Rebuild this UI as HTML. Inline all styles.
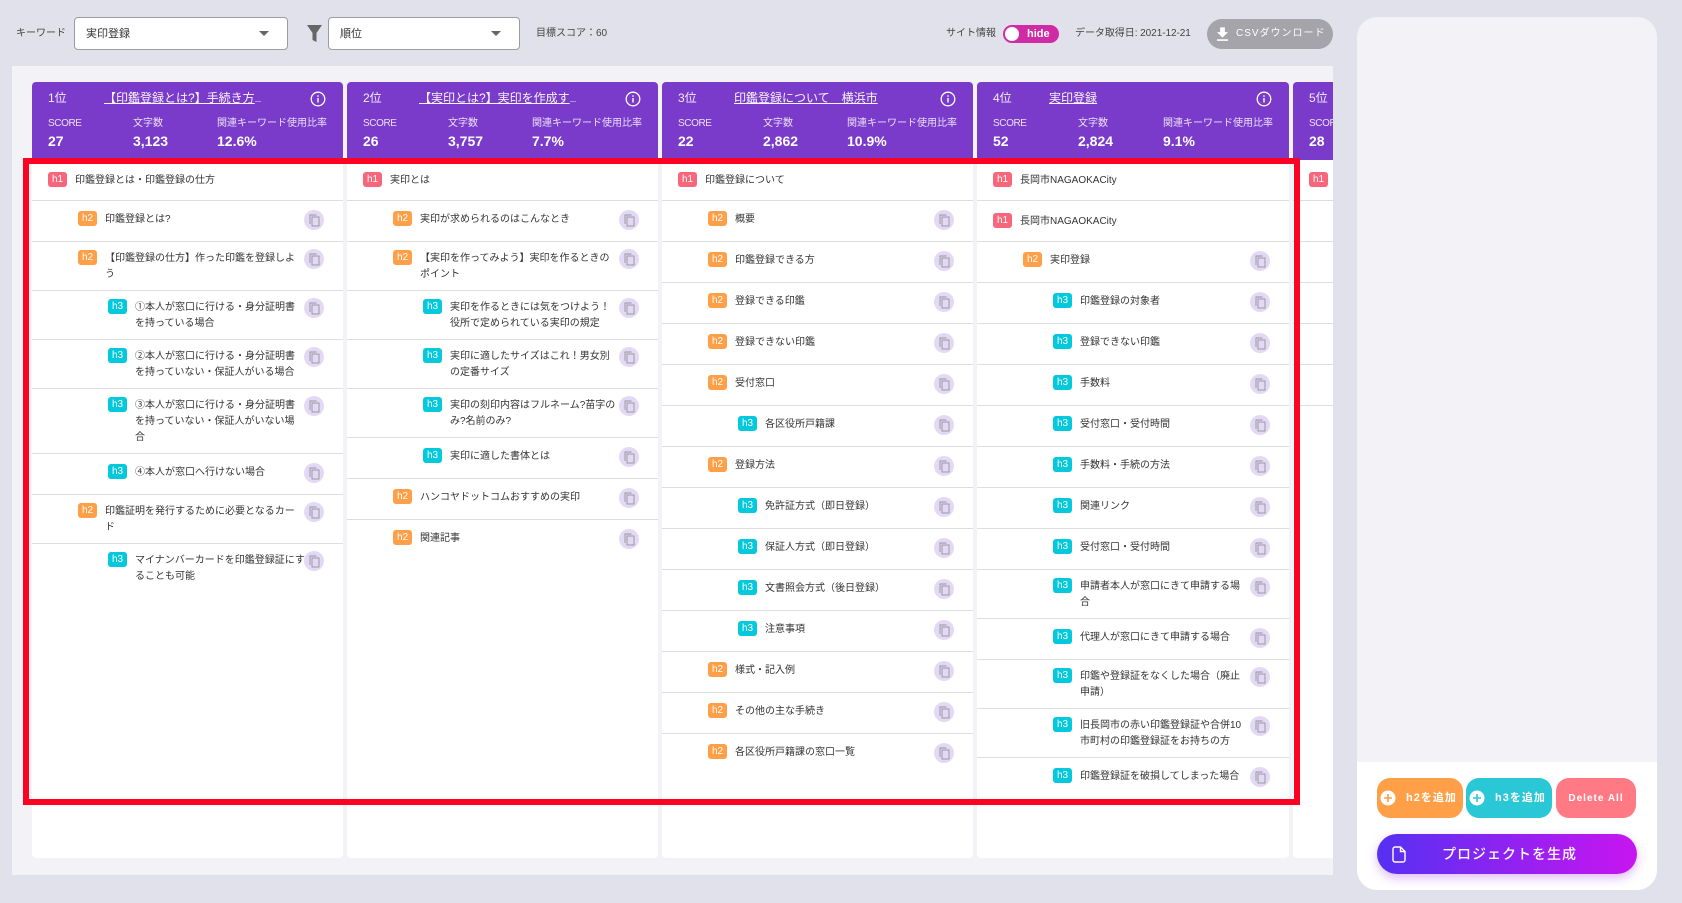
<!DOCTYPE html>
<html lang="ja"><head><meta charset="utf-8"><title>実印登録</title>
<style>
*{box-sizing:border-box}
html,body{margin:0;padding:0}
body{width:1682px;height:903px;overflow:hidden;position:relative;background:#e0e1eb;color:#333;font-family:"Liberation Sans","Noto Sans CJK JP",sans-serif;font-size:10px}
.a{position:absolute;white-space:nowrap}
.sel{position:absolute;top:17px;height:33px;background:#fff;border:1px solid #9b9ba0;border-radius:4px;font-size:11px;line-height:32px;padding-left:11px}
.sel:after{content:"";position:absolute;top:13px;right:18px;border-left:5px solid transparent;border-right:5px solid transparent;border-top:5px solid #666}
#main{position:absolute;left:12px;top:66px;width:1321px;height:809px;background:#f2f2f7;overflow:hidden}
.col{position:absolute;top:16px;width:311px;height:776px}
.hd{position:absolute;left:0;top:0;width:100%;height:78px;background:#7a3bcb;border-radius:4px 4px 0 0;color:#fff}
.hd .a{line-height:16px}
.rk{left:16px;top:8px;font-size:12px;opacity:.9}
.ti{left:72px;top:8px;font-size:12px;opacity:.95}
.ti s{text-decoration:none;font-size:9px;letter-spacing:-.5px}
.hd svg{position:absolute;left:278px;top:9px}
.lb{top:34px;font-size:10px;opacity:.85}
.sc{letter-spacing:-.4px}
.v{top:51px;font-size:14px;font-weight:700}
.x1{left:16px}.x2{left:101px}.x3{left:185px}
.bd{position:absolute;left:0;top:78px;width:100%;height:698px;background:#fff;border-radius:0 0 4px 4px}
.r{position:absolute;left:0;width:100%;border-top:1px solid #dedee2;height:1px}
.r.n{border-top:0}
.r i{position:absolute;width:19px;height:15px;border-radius:3px;color:#fff;font-style:normal;font-size:10px;line-height:15px;text-align:center;top:10px}
.r p{position:absolute;margin:0;white-space:nowrap;line-height:16px;font-size:10px;color:#333;top:11px}
.r svg{position:absolute;left:272px;top:9px;width:20px;height:20px}
.m i{top:8px}.m p{top:9px}.m svg{top:7px}
.h i{top:12px}.h p{top:13px}
.l1 i{left:16px;background:#f7667a}.l1 p{left:43px}
.l2 i{left:46px;background:#ff9f47}.l2 p{left:73px}
.l3 i{left:76px;background:#04c9dd}.l3 p{left:103px}
.c4{width:312px}
.c4 .r svg{left:273px}
.c4 .hd svg{left:279px}
.c4 .x3{left:186px}
.bt{position:absolute;top:778px;height:40px;border-radius:13px;color:#fff;font-weight:700;font-size:11px;letter-spacing:1px;line-height:40px}
.pl{position:absolute;left:3px;top:12px}
#red{position:absolute;left:23px;top:158px;width:1277px;height:647px;border:6px solid #fc0324}
</style></head><body>
<svg width="0" height="0" style="position:absolute"><defs>
<symbol id="cp" viewBox="0 0 20 20"><circle cx="10" cy="10" r="10" fill="#e4d9f4"/><path d="M6 14V5h6.500" fill="none" stroke="#92929c" stroke-width=".9"/><rect x="8" y="7" width="7" height="9" fill="none" stroke="#92929c" stroke-width=".9"/></symbol>
<symbol id="inf" viewBox="0 0 16 16"><circle cx="8" cy="8" r="6.800" fill="none" stroke="#fff" stroke-width="1.300"/><rect x="7.300" y="7" width="1.400" height="4.500" fill="#fff"/><rect x="7.300" y="4.300" width="1.400" height="1.500" fill="#fff"/></symbol>
</defs></svg>

<div class="a" style="left:16px;top:26px;line-height:16px;color:#444">キーワード</div>
<div class="sel" style="left:74px;width:214px">実印登録</div>
<svg class="a" style="left:307px;top:25px" width="15" height="17" viewBox="0 0 15 17"><path d="M0 0H15L9.500 8V17L5.500 15V8Z" fill="#666"/></svg>
<div class="sel" style="left:328px;width:192px">順位</div>
<div class="a" style="left:536px;top:26px;line-height:16px;color:#444">目標スコア：60</div>
<div class="a" style="left:946px;top:26px;line-height:16px;color:#444">サイト情報</div>
<div class="a" style="left:1003px;top:25px;width:56px;height:18px;border-radius:9px;background:#d02aa5"><span style="position:absolute;left:2px;top:2px;width:14px;height:14px;border-radius:50%;background:#fff"></span><span style="position:absolute;left:24px;top:0;line-height:18px;color:#fff;font-weight:700;font-size:11px">hide</span></div>
<div class="a" style="left:1075px;top:26px;line-height:16px;color:#444;letter-spacing:-.05px">データ取得日: 2021-12-21</div>
<div class="a" style="left:1207px;top:19px;width:126px;height:30px;border-radius:15px;background:#a5a4aa;color:#fff;line-height:30px;padding-left:29px;letter-spacing:1px">CSVダウンロード<svg style="position:absolute;left:6px;top:6px" width="19" height="19" viewBox="0 0 24 24"><path d="M19 9h-4V3H9v6H5l7 7 7-7zM5 18v2h14v-2H5z" fill="#fff"/></svg></div>

<div id="main">
<!-- col 1 -->
<div class="col" style="left:20px">
<div class="bd">
<div class="r n h l1" style="top:0"><i>h1</i><p>印鑑登録とは・印鑑登録の仕方</p></div>
<div class="r l2" style="top:40px"><i>h2</i><p>印鑑登録とは?</p><svg><use href="#cp"/></svg></div>
<div class="r m l2" style="top:81px"><i>h2</i><p>【印鑑登録の仕方】作った印鑑を登録しよ<br>う</p><svg><use href="#cp"/></svg></div>
<div class="r m l3" style="top:130px"><i>h3</i><p>①本人が窓口に行ける・身分証明書<br>を持っている場合</p><svg><use href="#cp"/></svg></div>
<div class="r m l3" style="top:179px"><i>h3</i><p>②本人が窓口に行ける・身分証明書<br>を持っていない・保証人がいる場合</p><svg><use href="#cp"/></svg></div>
<div class="r m l3" style="top:228px"><i>h3</i><p>③本人が窓口に行ける・身分証明書<br>を持っていない・保証人がいない場<br>合</p><svg><use href="#cp"/></svg></div>
<div class="r l3" style="top:293px"><i>h3</i><p>④本人が窓口へ行けない場合</p><svg><use href="#cp"/></svg></div>
<div class="r m l2" style="top:334px"><i>h2</i><p>印鑑証明を発行するために必要となるカー<br>ド</p><svg><use href="#cp"/></svg></div>
<div class="r m l3" style="top:383px"><i>h3</i><p>マイナンバーカードを印鑑登録証にす<br>ることも可能</p><svg><use href="#cp"/></svg></div>
</div>
<div class="hd"><div class="a rk">1位</div><div class="a ti"><u>【印鑑登録とは?】手続き方</u><s>...</s></div><svg width="16" height="16"><use href="#inf"/></svg>
<div class="a lb x1 sc">SCORE</div><div class="a lb x2">文字数</div><div class="a lb x3">関連キーワード使用比率</div>
<div class="a v x1">27</div><div class="a v x2">3,123</div><div class="a v x3">12.6%</div></div>
</div>
<!-- col 2 -->
<div class="col" style="left:335px">
<div class="bd">
<div class="r n h l1" style="top:0"><i>h1</i><p>実印とは</p></div>
<div class="r l2" style="top:40px"><i>h2</i><p>実印が求められるのはこんなとき</p><svg><use href="#cp"/></svg></div>
<div class="r m l2" style="top:81px"><i>h2</i><p>【実印を作ってみよう】実印を作るときの<br>ポイント</p><svg><use href="#cp"/></svg></div>
<div class="r m l3" style="top:130px"><i>h3</i><p>実印を作るときには気をつけよう！<br>役所で定められている実印の規定</p><svg><use href="#cp"/></svg></div>
<div class="r m l3" style="top:179px"><i>h3</i><p>実印に適したサイズはこれ！男女別<br>の定番サイズ</p><svg><use href="#cp"/></svg></div>
<div class="r m l3" style="top:228px"><i>h3</i><p>実印の刻印内容はフルネーム?苗字の<br>み?名前のみ?</p><svg><use href="#cp"/></svg></div>
<div class="r l3" style="top:277px"><i>h3</i><p>実印に適した書体とは</p><svg><use href="#cp"/></svg></div>
<div class="r l2" style="top:318px"><i>h2</i><p>ハンコヤドットコムおすすめの実印</p><svg><use href="#cp"/></svg></div>
<div class="r l2" style="top:359px"><i>h2</i><p>関連記事</p><svg><use href="#cp"/></svg></div>
</div>
<div class="hd"><div class="a rk">2位</div><div class="a ti"><u>【実印とは?】実印を作成す</u><s>...</s></div><svg width="16" height="16"><use href="#inf"/></svg>
<div class="a lb x1 sc">SCORE</div><div class="a lb x2">文字数</div><div class="a lb x3">関連キーワード使用比率</div>
<div class="a v x1">26</div><div class="a v x2">3,757</div><div class="a v x3">7.7%</div></div>
</div>
<!-- col 3 -->
<div class="col" style="left:650px">
<div class="bd">
<div class="r n h l1" style="top:0"><i>h1</i><p>印鑑登録について</p></div>
<div class="r l2" style="top:40px"><i>h2</i><p>概要</p><svg><use href="#cp"/></svg></div>
<div class="r l2" style="top:81px"><i>h2</i><p>印鑑登録できる方</p><svg><use href="#cp"/></svg></div>
<div class="r l2" style="top:122px"><i>h2</i><p>登録できる印鑑</p><svg><use href="#cp"/></svg></div>
<div class="r l2" style="top:163px"><i>h2</i><p>登録できない印鑑</p><svg><use href="#cp"/></svg></div>
<div class="r l2" style="top:204px"><i>h2</i><p>受付窓口</p><svg><use href="#cp"/></svg></div>
<div class="r l3" style="top:245px"><i>h3</i><p>各区役所戸籍課</p><svg><use href="#cp"/></svg></div>
<div class="r l2" style="top:286px"><i>h2</i><p>登録方法</p><svg><use href="#cp"/></svg></div>
<div class="r l3" style="top:327px"><i>h3</i><p>免許証方式（即日登録）</p><svg><use href="#cp"/></svg></div>
<div class="r l3" style="top:368px"><i>h3</i><p>保証人方式（即日登録）</p><svg><use href="#cp"/></svg></div>
<div class="r l3" style="top:409px"><i>h3</i><p>文書照会方式（後日登録）</p><svg><use href="#cp"/></svg></div>
<div class="r l3" style="top:450px"><i>h3</i><p>注意事項</p><svg><use href="#cp"/></svg></div>
<div class="r l2" style="top:491px"><i>h2</i><p>様式・記入例</p><svg><use href="#cp"/></svg></div>
<div class="r l2" style="top:532px"><i>h2</i><p>その他の主な手続き</p><svg><use href="#cp"/></svg></div>
<div class="r l2" style="top:573px"><i>h2</i><p>各区役所戸籍課の窓口一覧</p><svg><use href="#cp"/></svg></div>
</div>
<div class="hd"><div class="a rk">3位</div><div class="a ti"><u>印鑑登録について　横浜市</u></div><svg width="16" height="16"><use href="#inf"/></svg>
<div class="a lb x1 sc">SCORE</div><div class="a lb x2">文字数</div><div class="a lb x3">関連キーワード使用比率</div>
<div class="a v x1">22</div><div class="a v x2">2,862</div><div class="a v x3">10.9%</div></div>
</div>
<!-- col 4 -->
<div class="col c4" style="left:965px">
<div class="bd">
<div class="r n h l1" style="top:0"><i>h1</i><p>長岡市NAGAOKACity</p></div>
<div class="r h l1" style="top:40px"><i>h1</i><p>長岡市NAGAOKACity</p></div>
<div class="r l2" style="top:81px"><i>h2</i><p>実印登録</p><svg><use href="#cp"/></svg></div>
<div class="r l3" style="top:122px"><i>h3</i><p>印鑑登録の対象者</p><svg><use href="#cp"/></svg></div>
<div class="r l3" style="top:163px"><i>h3</i><p>登録できない印鑑</p><svg><use href="#cp"/></svg></div>
<div class="r l3" style="top:204px"><i>h3</i><p>手数料</p><svg><use href="#cp"/></svg></div>
<div class="r l3" style="top:245px"><i>h3</i><p>受付窓口・受付時間</p><svg><use href="#cp"/></svg></div>
<div class="r l3" style="top:286px"><i>h3</i><p>手数料・手続の方法</p><svg><use href="#cp"/></svg></div>
<div class="r l3" style="top:327px"><i>h3</i><p>関連リンク</p><svg><use href="#cp"/></svg></div>
<div class="r l3" style="top:368px"><i>h3</i><p>受付窓口・受付時間</p><svg><use href="#cp"/></svg></div>
<div class="r m l3" style="top:409px"><i>h3</i><p>申請者本人が窓口にきて申請する場<br>合</p><svg><use href="#cp"/></svg></div>
<div class="r l3" style="top:458px"><i>h3</i><p>代理人が窓口にきて申請する場合</p><svg><use href="#cp"/></svg></div>
<div class="r m l3" style="top:499px"><i>h3</i><p>印鑑や登録証をなくした場合（廃止<br>申請）</p><svg><use href="#cp"/></svg></div>
<div class="r m l3" style="top:548px"><i>h3</i><p>旧長岡市の赤い印鑑登録証や合併10<br>市町村の印鑑登録証をお持ちの方</p><svg><use href="#cp"/></svg></div>
<div class="r l3" style="top:597px"><i>h3</i><p>印鑑登録証を破損してしまった場合</p><svg><use href="#cp"/></svg></div>
</div>
<div class="hd"><div class="a rk">4位</div><div class="a ti"><u>実印登録</u></div><svg width="16" height="16"><use href="#inf"/></svg>
<div class="a lb x1 sc">SCORE</div><div class="a lb x2">文字数</div><div class="a lb x3">関連キーワード使用比率</div>
<div class="a v x1">52</div><div class="a v x2">2,824</div><div class="a v x3">9.1%</div></div>
</div>
<!-- col 5 -->
<div class="col" style="left:1281px">
<div class="bd">
<div class="r n h l1" style="top:0"><i>h1</i></div>
<div class="r" style="top:40px"></div>
<div class="r" style="top:81px"></div>
<div class="r" style="top:122px"></div>
<div class="r" style="top:163px"></div>
<div class="r" style="top:204px"></div>
<div class="r" style="top:245px"></div>
</div>
<div class="hd"><div class="a rk">5位</div>
<div class="a lb x1 sc">SCORE</div>
<div class="a v x1">28</div></div>
</div>
</div>

<div id="red"></div>

<!-- right panel -->
<div style="position:absolute;left:1357px;top:17px;width:300px;height:873px;border-radius:20px;background:#f2f2f7;overflow:hidden"><div style="position:absolute;left:0;top:745px;width:300px;height:128px;background:#fff"></div></div>
<div class="bt" style="left:1377px;width:86px;background:#ff9f47;padding-left:29px"><svg class="pl" width="16" height="16" viewBox="0 0 16 16"><circle cx="8" cy="8" r="7.500" fill="#fff"/><path d="M8 4v8M4 8h8" stroke="#ff9f47" stroke-width="1.600"/></svg>h2を追加</div>
<div class="bt" style="left:1466px;width:86px;background:#2ac7d6;padding-left:29px"><svg class="pl" width="16" height="16" viewBox="0 0 16 16"><circle cx="8" cy="8" r="7.500" fill="#fff"/><path d="M8 4v8M4 8h8" stroke="#2ac7d6" stroke-width="1.600"/></svg>h3を追加</div>
<div class="bt" style="left:1556px;width:80px;background:#ff7a85;text-align:center;font-size:10px;line-height:41px">Delete All</div>
<div class="a" style="left:1377px;top:834px;width:260px;height:40px;border-radius:20px;background:linear-gradient(90deg,#5630f2,#c815f0);box-shadow:0 4px 10px rgba(160,60,240,.35);color:#fff;font-size:14px;font-weight:500;letter-spacing:1px;line-height:40px;padding-left:65px">プロジェクトを生成<svg style="position:absolute;left:15px;top:12px" width="14" height="17" viewBox="0 0 14 17"><path d="M1 3a2 2 0 0 1 2-2h5.500L13 5.500V14a2 2 0 0 1-2 2H3a2 2 0 0 1-2-2zM8.500 1v4.500H13" fill="none" stroke="#fff" stroke-width="1.400"/></svg></div>
</body></html>
